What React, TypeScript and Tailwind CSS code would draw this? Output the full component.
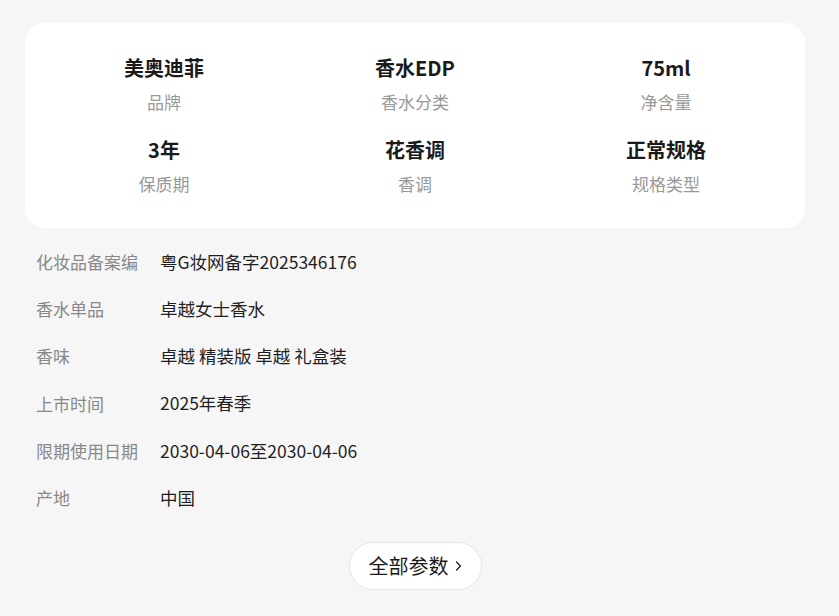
import React from "react"

const specs = [
  { value: "美奥迪菲", label: "品牌" },
  { value: "香水EDP", label: "香水分类" },
  { value: "75ml", label: "净含量" },
  { value: "3年", label: "保质期" },
  { value: "花香调", label: "香调" },
  { value: "正常规格", label: "规格类型" },
]

const rows = [
  { label: "化妆品备案编", value: "粤G妆网备字2025346176" },
  { label: "香水单品", value: "卓越女士香水" },
  { label: "香味", value: "卓越 精装版 卓越 礼盒装" },
  { label: "上市时间", value: "2025年春季" },
  { label: "限期使用日期", value: "2030-04-06至2030-04-06" },
  { label: "产地", value: "中国" },
]

export default function App() {
  return (
    <div
      className="min-h-[616px] w-full bg-[#f6f6f6] pl-[25px] pr-[34px] pt-[23px]"
      style={{ fontFamily: '"Noto Sans CJK SC", "Noto Sans", sans-serif' }}
    >
      <div className="grid grid-cols-3 gap-y-[22px] rounded-[20px] bg-white px-[13.5px] pt-[31px] pb-[32px]">
        {specs.map((s) => (
          <div key={s.label} className="flex flex-col items-center gap-[8px]">
            <div className="text-[20px] font-bold leading-[28px] text-[#1a1a1a]">{s.value}</div>
            <div className="text-[17px] leading-[24px] text-[#999999]">{s.label}</div>
          </div>
        ))}
      </div>

      <div className="pt-[10px]">
        {rows.map((r) => (
          <div key={r.label} className="flex h-[47.3px] items-center">
            <div className="w-[135px] pl-[11px] text-[17px] text-[#888888]">{r.label}</div>
            <div className="text-[17.5px] text-[#1f1f1f]">{r.value}</div>
          </div>
        ))}
      </div>

      <div className="flex justify-center pt-[20px]">
        <button className="flex h-[48px] w-[133px] items-center justify-center gap-[6px] rounded-full border border-[#e6e6e6] bg-white text-[20px] text-[#1a1a1a]">
          <span>全部参数</span>
          <svg width="7" height="12" viewBox="0 0 7 12" fill="none" className="mt-[1px]">
            <path d="M1.5 2l4 4-4 4" stroke="#1a1a1a" strokeWidth="1.2" strokeLinecap="round" strokeLinejoin="round" />
          </svg>
        </button>
      </div>
    </div>
  )
}
